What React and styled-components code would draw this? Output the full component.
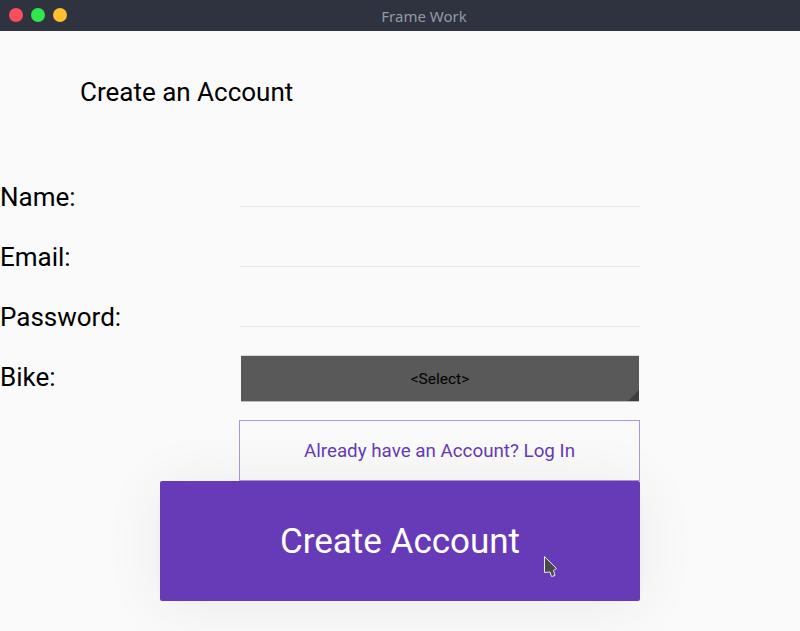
import React from "react";
import styled, { createGlobalStyle } from "styled-components";

const GlobalStyle = createGlobalStyle`
  html, body {
    margin: 0;
    padding: 0;
    background: #fafafa;
  }
  * {
    box-sizing: border-box;
  }
`;

const fields = [
  { label: "Name:", type: "text" },
  { label: "Email:", type: "email" },
  { label: "Password:", type: "password" },
];

const App = () => {
  return (
    <Window>
      <GlobalStyle />
      <TitleBar>
        <Lights>
          <Light color="#fc4e5a" />
          <Light color="#30e64a" />
          <Light color="#fdbf2e" />
        </Lights>
        <WindowTitle>Frame Work</WindowTitle>
      </TitleBar>
      <Content>
        <Heading>Create an Account</Heading>
        <Form>
          {fields.map((f) => (
            <Row key={f.label}>
              <Label>{f.label}</Label>
              <Input type={f.type} />
            </Row>
          ))}
          <Row>
            <Label>Bike:</Label>
            <Select>
              &lt;Select&gt;
              <Corner />
            </Select>
          </Row>
        </Form>
        <LinkRow>
          <LoginButton>Already have an Account? Log In</LoginButton>
        </LinkRow>
        <SubmitRow>
          <SubmitButton>
            Create Account
            <Cursor width="16" height="24" viewBox="0 0 16 24">
              <path
                d="M1.5 1.5 L13.5 13.5 L10.5 15.5 L12 20.5 L8.5 21.5 L7 17 L1.5 17.5 Z"
                fill="#4a4a4a"
                stroke="#e8e4ee"
                strokeWidth="1"
              />
            </Cursor>
          </SubmitButton>
        </SubmitRow>
      </Content>
    </Window>
  );
};

const Window = styled.div`
  width: 800px;
  height: 631px;
  overflow: hidden;
  background: #fafafa;
  font-family: Roboto, "Liberation Sans", sans-serif;
`;
const TitleBar = styled.div`
  height: 31px;
  background: #2f3340;
  display: flex;
  align-items: center;
  justify-content: center;
  position: relative;
`;
const Lights = styled.div`
  position: absolute;
  left: 9px;
  top: 8px;
  display: flex;
  gap: 8px;
`;
const Light = styled.span`
  width: 14px;
  height: 14px;
  border-radius: 50%;
  background: ${(p) => p.color};
`;
const WindowTitle = styled.span`
  font-family: "Noto Sans", sans-serif;
  font-size: 15px;
  color: #929aa8;
  margin: 0 0 0 48px;
`;
const Content = styled.div`
  display: flex;
  flex-direction: column;
`;
const Heading = styled.h1`
  margin: 0;
  height: 136px;
  padding: 43px 0 0 80px;
  font-size: 26px;
  line-height: 36px;
  font-weight: 400;
  color: #000;
`;
const Form = styled.div`
  display: flex;
  flex-direction: column;
`;
const Row = styled.div`
  display: grid;
  grid-template-columns: 240px 400px;
  height: 60px;
  align-items: start;
`;
const Label = styled.label`
  font-size: 26px;
  line-height: 60px;
  color: #000;
`;
const Input = styled.input`
  display: block;
  width: 400px;
  height: 40px;
  border: none;
  border-bottom: 1px solid #e6e6e6;
  background: transparent;
  outline: none;
`;
const Select = styled.div`
  position: relative;
  margin: 8px 1px 0;
  height: 47px;
  background: #595959;
  border-top: 1px solid #d8d8d8;
  border-bottom: 1px solid #bdbdbd;
  display: flex;
  align-items: center;
  justify-content: center;
  font-size: 15.5px;
  color: #000;
  border-radius: 1px;
`;
const Corner = styled.span`
  position: absolute;
  right: 0;
  bottom: 0;
  border-style: solid;
  border-width: 0 0 11px 11px;
  border-color: transparent transparent #3d3d3d transparent;
`;
const LinkRow = styled.div`
  padding: 13px 0 0 239px;
`;
const LoginButton = styled.button`
  display: block;
  width: 401px;
  height: 61px;
  padding: 0;
  background: transparent;
  border: 1px solid #b094dc;
  font-family: inherit;
  font-size: 18.8px;
  color: #673ab7;
`;
const SubmitRow = styled.div`
  padding-left: 160px;
`;
const SubmitButton = styled.button`
  position: relative;
  display: block;
  width: 480px;
  height: 120px;
  padding: 0;
  border: none;
  border-radius: 2px;
  background: #673ab7;
  color: #fff;
  font-family: inherit;
  font-size: 35px;
  box-shadow: 0 4px 60px rgba(0, 0, 0, 0.07);
`;
const Cursor = styled.svg`
  position: absolute;
  left: 383px;
  top: 74px;
`;

export default App;
